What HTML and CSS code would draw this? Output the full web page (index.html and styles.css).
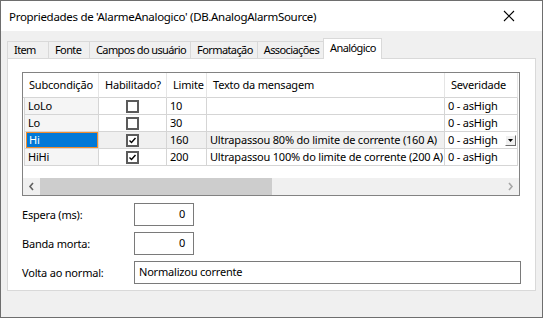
FILE: index.html
```html
<!DOCTYPE html>
<html lang="pt">
<head>
    <meta charset="UTF-8">
    <title>Propriedades de 'AlarmeAnalogico'</title>
    <link rel="stylesheet" href="styles.css">
</head>
<body>
    <div class="window">
        <div class="titlebar">
            <span class="title">Propriedades de 'AlarmeAnalogico' (DB.AnalogAlarmSource)</span>
            <svg class="close" width="12" height="12" viewBox="0 0 12 12">
                <path d="M1 1 L11 11 M11 1 L1 11" stroke="#000" stroke-width="1.1" fill="none"/>
            </svg>
        </div>
        <div class="window-body">
            <div class="tabs">
                <div class="tab">Item</div>
                <div class="tab">Fonte</div>
                <div class="tab">Campos do usuário</div>
                <div class="tab">Formatação</div>
                <div class="tab">Associações</div>
                <div class="tab active">Analógico</div>
            </div>
            <div class="panel">
                <div class="grid">
                    <div class="rows">
                        <div class="row header">
                            <div class="cell">Subcondição</div>
                            <div class="cell">Habilitado?</div>
                            <div class="cell">Limite</div>
                            <div class="cell">Texto da mensagem</div>
                            <div class="cell">Severidade</div>
                        </div>
                        <div class="row">
                            <div class="cell name">LoLo</div>
                            <div class="cell check"><span class="box"></span></div>
                            <div class="cell">10</div>
                            <div class="cell"></div>
                            <div class="cell">0 - asHigh</div>
                        </div>
                        <div class="row">
                            <div class="cell name">Lo</div>
                            <div class="cell check"><span class="box"></span></div>
                            <div class="cell">30</div>
                            <div class="cell"></div>
                            <div class="cell">0 - asHigh</div>
                        </div>
                        <div class="row current">
                            <div class="cell name selected"><span>Hi</span></div>
                            <div class="cell check"><span class="box"><svg width="9" height="9" viewBox="0 0 9 9"><path d="M1.5 4.5 L3.5 6.5 L7.5 2" stroke="#000" stroke-width="1.4" fill="none"/></svg></span></div>
                            <div class="cell">160</div>
                            <div class="cell">Ultrapassou 80% do limite de corrente (160 A)</div>
                            <div class="cell combo">0 - asHigh
                                <span class="drop"><svg width="5" height="3" viewBox="0 0 5 3"><path d="M0 0 H5 L2.5 3 Z" fill="#000"/></svg></span>
                            </div>
                        </div>
                        <div class="row">
                            <div class="cell name">HiHi</div>
                            <div class="cell check"><span class="box"><svg width="9" height="9" viewBox="0 0 9 9"><path d="M1.5 4.5 L3.5 6.5 L7.5 2" stroke="#000" stroke-width="1.4" fill="none"/></svg></span></div>
                            <div class="cell">200</div>
                            <div class="cell">Ultrapassou 100% do limite de corrente (200 A)</div>
                            <div class="cell">0 - asHigh</div>
                        </div>
                    </div>
                    <div class="hscroll">
                        <div class="arrow">
                            <svg width="7" height="9" viewBox="0 0 7 9"><path d="M5 1 L2 4.5 L5 8" stroke="#606060" stroke-width="1.6" fill="none"/></svg>
                        </div>
                        <div class="thumb"></div>
                        <div class="track"></div>
                        <div class="arrow">
                            <svg width="7" height="9" viewBox="0 0 7 9"><path d="M2 1 L5 4.5 L2 8" stroke="#a6a6a6" stroke-width="1.6" fill="none"/></svg>
                        </div>
                    </div>
                </div>
                <div class="form">
                    <label>Espera (ms):</label>
                    <div class="field number">0</div>
                    <label>Banda morta:</label>
                    <div class="field number">0</div>
                    <label>Volta ao normal:</label>
                    <div class="field">Normalizou corrente</div>
                </div>
            </div>
        </div>
    </div>
</body>
</html>
```

FILE: styles.css
```css
/* Base */
body {
    margin: 0;
    font-family: 'Noto Sans', 'Liberation Sans', Arial, sans-serif;
    font-size: 11px;
    letter-spacing: -0.2px;
    color: #000;
    background: #f0f0f0;
}

.window {
    width: 543px;
    height: 318px;
    box-sizing: border-box;
    border: 1px solid #6e6e6e;
    background: #f0f0f0;
    display: flex;
    flex-direction: column;
}

/* Title bar */
.titlebar {
    height: 30px;
    background: #fff;
    display: flex;
    align-items: center;
    justify-content: space-between;
    padding: 0 27px 0 8px;
}

.title {
    font-size: 11.5px;
    letter-spacing: -0.3px;
}

/* Tabs */
.window-body {
    padding: 7px 6px 0 6px;
}

.tabs {
    display: flex;
    align-items: flex-end;
    height: 20px;
}

.tab {
    min-width: 42px;
    height: 17px;
    box-sizing: border-box;
    border: 1px solid #d9d9d9;
    border-bottom: none;
    margin-right: -1px;
    padding: 0 4px 0 6px;
    line-height: 16px;
    letter-spacing: -0.6px;
    background: #f0f0f0;
}

.tab.active {
    height: 21px;
    margin-bottom: -1px;
    background: #fff;
    position: relative;
    z-index: 1;
    padding: 1px 5px 0 6px;
    line-height: 15px;
}

.panel {
    height: 233px;
    box-sizing: border-box;
    border: 1px solid #d9d9d9;
    background: #fff;
    padding: 13px 15px 0 14px;
}

/* List grid */
.grid {
    height: 124px;
    box-sizing: border-box;
    border: 1px solid #828282;
    display: flex;
    flex-direction: column;
}

.rows {
    flex: 1;
}

.row {
    display: grid;
    grid-template-columns: 76px 68px 40px 238px 73px;
    height: 17px;
}

.cell {
    box-sizing: border-box;
    border-right: 1px solid #d5d5d5;
    border-bottom: 1px solid #d5d5d5;
    padding-left: 3px;
    line-height: 16px;
    white-space: nowrap;
    overflow: hidden;
}

.row.header {
    height: 25px;
}

.row.header .cell {
    line-height: 24px;
    padding-left: 6px;
    border-right-color: #e5e5e5;
}

.cell.name {
    background: #f5f5f5;
    border-left: 1px solid #d5d5d5;
    margin-left: 1px;
    padding-left: 3px;
}

.row.current .cell {
    background: #f0f0f0;
}

.row.current .cell.combo {
    background: #fff;
    display: flex;
    justify-content: space-between;
    align-items: center;
    padding-right: 1px;
}

.cell.selected {
    padding: 0;
    background: #f5f5f5;
}

.cell.selected span {
    display: block;
    height: 16px;
    box-sizing: border-box;
    margin-left: 1px;
    border: 1px solid #f08c2c;
    background: #0078d7;
    color: #fff;
    padding-left: 2px;
    line-height: 14px;
}

.cell.check {
    display: flex;
    justify-content: center;
    align-items: center;
    padding: 0;
}

.box {
    width: 13px;
    height: 13px;
    box-sizing: border-box;
    border: 2px solid #5b5b5b;
    background: #fff;
    display: flex;
    justify-content: center;
    align-items: center;
}

.drop {
    width: 11px;
    height: 11px;
    box-sizing: border-box;
    border: 1px solid;
    border-color: #fff #6b6b6b #6b6b6b #fff;
    background: #f0f0f0;
    display: flex;
    justify-content: center;
    align-items: center;
}

/* Horizontal scrollbar */
.hscroll {
    height: 17px;
    display: flex;
    background: #f0f0f0;
}

.arrow {
    width: 17px;
    display: flex;
    justify-content: center;
    align-items: center;
}

.thumb {
    width: 232px;
    background: #cdcdcd;
}

.track {
    flex: 1;
}

/* Fields below the grid */
.form {
    display: grid;
    grid-template-columns: 112px 1fr;
    row-gap: 6px;
    margin-top: 7px;
    margin-right: -1px;
}

.form label {
    line-height: 23px;
}

.field {
    height: 23px;
    box-sizing: border-box;
    border: 1px solid #7a7a7a;
    padding: 0 4px;
    line-height: 19px;
}

.field.number {
    width: 60px;
    text-align: right;
    padding-right: 8px;
}
```
